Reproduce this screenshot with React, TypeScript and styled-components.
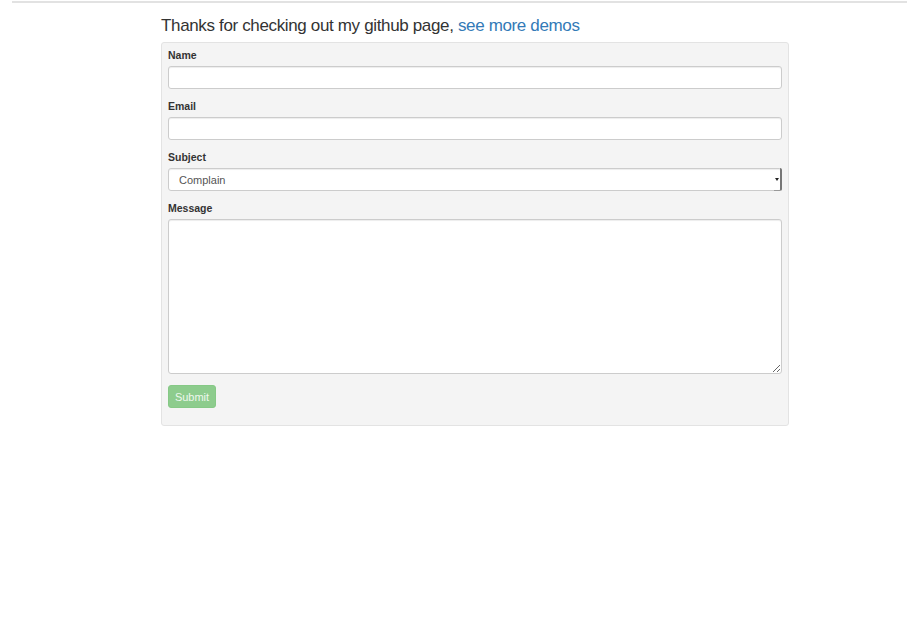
import React from "react";
import styled, { createGlobalStyle } from "styled-components";

const Global = createGlobalStyle`
  html, body { margin: 0; padding: 0; background: #fff; }
  body { font-family: "Liberation Sans", Arial, sans-serif; color: #333; }
  * { box-sizing: border-box; }
`;

const Page = styled.div`
  padding: 1px 13px 0 12px;
`;

const TopRule = styled.hr`
  margin: 0;
  border: 0;
  border-top: 2px solid #e2e2e2;
`;

const Container = styled.div`
  width: 628px;
  margin: 0 0 0 149px;
`;

const Title = styled.h1`
  margin: 12px 0 5px 0;
  font-size: 17px;
  font-weight: normal;
  line-height: 22px;
  color: #333;
  letter-spacing: -0.35px;
`;

const Link = styled.a`
  color: #337ab7;
  text-decoration: none;
`;

const Well = styled.form`
  background: #f4f4f4;
  border: 1px solid #e3e3e3;
  border-radius: 3px;
  padding: 6px 6px 17px 6px;
  display: flex;
  flex-direction: column;
`;

const Group = styled.div`
  display: flex;
  flex-direction: column;
  margin-bottom: 11px;
`;

const Label = styled.label`
  font-size: 10.5px;
  font-weight: bold;
  line-height: 12px;
  margin-bottom: 5px;
  color: #333;
`;

const Input = styled.input`
  height: 23px;
  border: 1px solid #ccc;
  border-radius: 3px;
  background: #fff;
  font: 11px "Liberation Sans", Arial, sans-serif;
  padding: 0 8px;
  box-shadow: inset 0 1px 1px rgba(0,0,0,0.075);
  outline: none;
`;

const SelectWrap = styled.div`
  position: relative;
  height: 23px;
`;

const Select = styled.select`
  appearance: none;
  -webkit-appearance: none;
  width: 100%;
  height: 23px;
  border: 1px solid #ccc;
  border-radius: 3px;
  background: #fff;
  font: 11px "Liberation Sans", Arial, sans-serif;
  color: #555;
  padding: 0 10px;
  box-shadow: inset 0 1px 1px rgba(0,0,0,0.075);
  outline: none;
`;

const Arrow = styled.span`
  position: absolute;
  right: 0;
  top: 0;
  width: 8px;
  height: 23px;
  border-right: 2px solid #777;
  border-bottom: 1px solid #999;
  border-radius: 0 2px 2px 0;
  pointer-events: none;
  &::after {
    content: "";
    position: absolute;
    left: 1px;
    top: 10px;
    border-left: 2px solid transparent;
    border-right: 2px solid transparent;
    border-top: 3px solid #222;
  }
`;

const TextArea = styled.textarea`
  height: 155px;
  border: 1px solid #ccc;
  border-radius: 3px;
  background: #fff;
  font: 11px "Liberation Sans", Arial, sans-serif;
  padding: 6px 8px;
  box-shadow: inset 0 1px 1px rgba(0,0,0,0.075);
  outline: none;
  resize: vertical;
`;

const ButtonRow = styled.div`
  display: flex;
`;

const Button = styled.button`
  width: 48px;
  height: 23px;
  border: 1px solid #86c986;
  border-radius: 3px;
  background: #8dcc8d;
  color: #eef8ee;
  font: 11px "Liberation Sans", Arial, sans-serif;
  padding: 0;
  cursor: not-allowed;
`;

export default function App() {
  return (
    <>
      <Global />
      <Page>
        <TopRule />
        <Container>
          <Title>
            Thanks for checking out my github page, <Link href="#">see more demos</Link>
          </Title>
          <Well onSubmit={(e) => e.preventDefault()}>
            <Group>
              <Label>Name</Label>
              <Input type="text" />
            </Group>
            <Group>
              <Label>Email</Label>
              <Input type="email" />
            </Group>
            <Group>
              <Label>Subject</Label>
              <SelectWrap>
                <Select defaultValue="Complain">
                  <option>Complain</option>
                  <option>Suggestion</option>
                  <option>Other</option>
                </Select>
                <Arrow />
              </SelectWrap>
            </Group>
            <Group>
              <Label>Message</Label>
              <TextArea />
            </Group>
            <ButtonRow>
              <Button type="submit" disabled>Submit</Button>
            </ButtonRow>
          </Well>
        </Container>
      </Page>
    </>
  );
}
